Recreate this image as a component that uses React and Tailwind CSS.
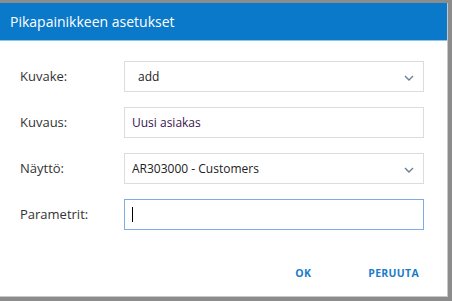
import React from "react";

function Chevron() {
  return (
    <svg width="10" height="6" viewBox="0 0 10 6" className="absolute right-[9px] top-[13px]">
      <path d="M1 1 L5 5 L9 1" fill="none" stroke="#6d7f95" strokeWidth="1.4" />
    </svg>
  );
}

export default function App() {
  const font = { fontFamily: '"Open Sans", "Noto Sans", sans-serif' };
  return (
    <div className="w-[452px] h-[301px] bg-[#8c8c8c] pt-[3px] pr-[4px] pb-[4px]" style={font}>
      <div className="w-full h-full bg-white border-r border-b border-[#c8c8c8] flex flex-col">
        <div className="h-[38px] bg-[#0a79c9] border-b border-[#8cc4ec] flex items-center pl-[10px] shrink-0">
          <span className="text-white text-[14px] leading-none">Pikapainikkeen asetukset</span>
        </div>
        <div className="flex flex-col gap-[15px] pt-[20px] pl-[20px]">
          <div className="flex items-center h-[31px]">
            <span className="w-[104px] text-[13px] text-[#333]">Kuvake:</span>
            <div className="relative w-[300px] h-[31px] border border-[#dcdcdc] flex items-center pl-[13px] text-[12px] text-[#222]">
              add
              <Chevron />
            </div>
          </div>
          <div className="flex items-center h-[31px]">
            <span className="w-[104px] text-[13px] text-[#333]">Kuvaus:</span>
            <div className="relative w-[300px] h-[31px] border border-[#dcdcdc] flex items-center pl-[7px] text-[12px] text-[#3a1450]">
              Uusi asiakas
            </div>
          </div>
          <div className="flex items-center h-[31px]">
            <span className="w-[104px] text-[13px] text-[#333]">Näyttö:</span>
            <div className="relative w-[300px] h-[31px] border border-[#dcdcdc] flex items-center pl-[7px] text-[12px] text-[#222]">
              AR303000 - Customers
              <Chevron />
            </div>
          </div>
          <div className="flex items-center h-[31px]">
            <span className="w-[104px] text-[13px] text-[#333]">Parametrit:</span>
            <div className="relative w-[300px] h-[31px] border border-[#7fa9ea] flex items-center pl-[7px]">
              <div className="w-[1px] h-[15px] bg-black"></div>
            </div>
          </div>
        </div>
        <div className="flex justify-end items-center mt-[36px] pr-[28px] gap-[57px]">
          <span className="text-[10.5px] font-bold text-[#1a7ccb] tracking-[0.3px]">OK</span>
          <span className="text-[10.5px] font-bold text-[#1a7ccb] tracking-[0.3px]">PERUUTA</span>
        </div>
      </div>
    </div>
  );
}
